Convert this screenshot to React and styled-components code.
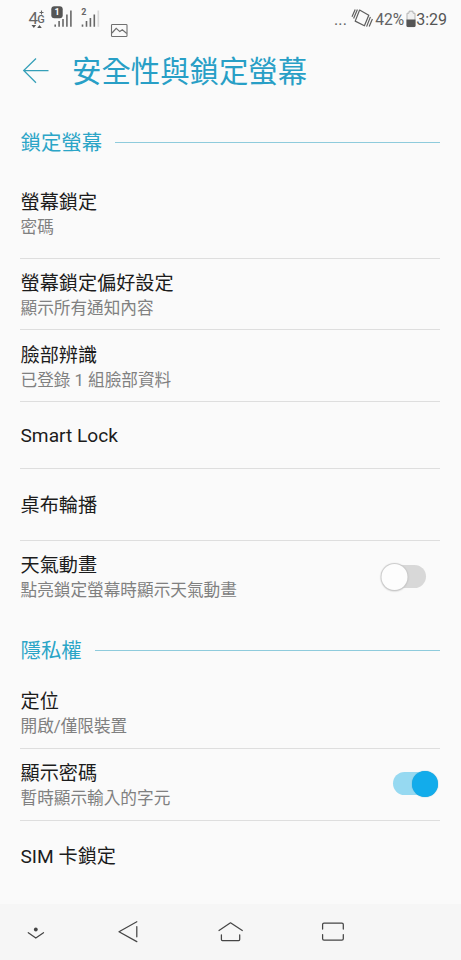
import React, { useState } from 'react';
import styled, { createGlobalStyle } from 'styled-components';

const GlobalStyle = createGlobalStyle`
  * {
    box-sizing: border-box;
  }

  body {
    margin: 0;
    background: #fafafa;
    font-family: Roboto, 'Noto Sans CJK TC', sans-serif;
  }
`;

const Screen = styled.div`
  width: 461px;
  height: 960px;
  display: flex;
  flex-direction: column;
  background: #fafafa;
  overflow: hidden;
`;

const StatusBar = styled.div`
  height: 38px;
  display: flex;
  justify-content: space-between;
  padding: 0 14px 0 28px;
  color: #626262;
`;

const StatusRight = styled.div`
  display: flex;
  align-items: center;
  height: 38px;
`;

const Dots = styled.span`
  font-size: 16px;
  letter-spacing: 0.2px;
  margin-right: 4px;
`;

const Percent = styled.span`
  font-size: 15.6px;
  padding-top: 1px;
  margin: 0 2px 0 2px;
`;

const Clock = styled.span`
  font-size: 16px;
  color: #555;
`;

const TitleBar = styled.header`
  height: 66px;
  display: flex;
  align-items: center;
  gap: 23px;
  padding-left: 22px;
`;

const Title = styled.h1`
  margin: 0;
  padding-top: 2px;
  font-size: 29.4px;
  line-height: 44px;
  font-weight: 400;
  color: #289fc6;
`;

const SectionHeader = styled.div`
  height: 76px;
  display: flex;
  align-items: center;
  gap: 13px;
  padding: 0 21px 0 20.5px;
  color: #2ba5c7;
  font-size: 20.4px;

  &::after {
    content: '';
    flex: 1;
    height: 1px;
    background: #8ecbdc;
  }
`;

const SectionName = styled.span`
  padding-top: 2px;
  line-height: 30px;
`;

const Row = styled.div`
  height: ${(props) => props.$height}px;
  display: flex;
  justify-content: space-between;
  align-items: ${(props) => (props.$single ? 'center' : 'flex-start')};
  margin: 0 21px 0 20px;
  padding-top: ${(props) => props.$top || 0}px;
  border-bottom: ${(props) => (props.$last ? 'none' : '1px solid #dedede')};
`;

const Label = styled.div`
  font-size: 19.15px;
  line-height: 25px;
  color: #1c1c1c;
  padding-left: 0.5px;
`;

const Summary = styled.div`
  font-size: 16.65px;
  line-height: 25px;
  color: #808080;
  padding-left: 0.5px;
`;

const Track = styled.button`
  width: 44px;
  height: 23px;
  display: flex;
  align-items: center;
  margin: ${(props) => (props.$on ? '11px 3px 0 0' : '12px 14px 0 0')};
  padding: 0;
  border: none;
  border-radius: 999px;
  background: ${(props) => (props.$on ? '#96d9f1' : '#d8d8d8')};
`;

const Knob = styled.span`
  width: 26px;
  height: 26px;
  flex: none;
  border-radius: 50%;
  background: ${(props) => (props.$on ? '#12aceb' : '#fdfdfd')};
  box-shadow: ${(props) =>
    props.$on ? '0 0 1px #3195bd' : '0 0 1px 1px #c9c9c9, 0 1px 2px #bbb'};
  transform: translateX(${(props) => (props.$on ? '19px' : '-0.5px')});
  transition: transform 0.2s;
`;

const NavBar = styled.nav`
  height: 56px;
  margin-top: auto;
  display: flex;
  background: #f6f6f6;
`;

const SignalIcons = () => (
  <svg width="105" height="38" viewBox="28 0 105 38" fill="none">
    <text x="28.5" y="24" fontSize="17" fill="#666">4</text>
    <text x="37.3" y="23" fontSize="11" fontWeight="500" fill="#666">G</text>
    <path d="M39.5 12.5h4M41.5 10.5v4" stroke="#666" strokeWidth="1.1" />
    <path d="M31.5 25h4.6l-2.3 3zM37.2 28h4.6l-2.3-3z" fill="#555" />
    <rect x="51.3" y="6.2" width="11.4" height="12" rx="3" fill="#555" />
    <text x="54.6" y="15.4" fontSize="9" fontWeight="700" fill="#fff">1</text>
    <path d="M55.2 24.5v2.3M59.1 21v5.8M63 19v7.8M66.9 14.5v12.3M70.9 10.5v16.3" stroke="#686868" strokeWidth="1.6" />
    <text x="81.3" y="15" fontSize="9" fontWeight="700" fill="#666">2</text>
    <path d="M82.5 24.5v2.3M86.5 21v5.8M90.4 18v8.8M94.3 14.5v12.3" stroke="#686868" strokeWidth="1.6" />
    <path d="M98.3 10.5v16.3" stroke="#d9d9d9" strokeWidth="1.7" />
    <rect x="111.5" y="24.5" width="15.5" height="12" rx="0.8" stroke="#707070" strokeWidth="1.1" />
    <path d="M112 33l4.2-4.7 3.6 3.3 2.5-1.8 4.5 3.7" stroke="#707070" strokeWidth="1.2" />
  </svg>
);

const RotateIcon = () => (
  <svg width="22" height="22" viewBox="0 0 22 22" fill="none" stroke="#5e5e5e" strokeWidth="1.2" strokeLinejoin="round">
    <path d="M8.6 2l9.2 5.2-4.4 10.6-9.2-4.7z" />
    <path d="M6.4 1.4L2.6 10.6M4.2 1.6L1 8.8M19.4 8.9l-3.8 9.7M21.4 11l-3.2 7.4" />
  </svg>
);

const BatteryIcon = () => (
  <svg width="10" height="18" viewBox="0 0 10 18">
    <path d="M3 1.2h4v2h2v12.5a1 1 0 01-1 1H2a1 1 0 01-1-1V3.2h2z" fill="#f0f0f0" stroke="#b3b3b3" />
    <path d="M.5 9.5h9v6.2a1.2 1.2 0 01-1.2 1.2H1.7A1.2 1.2 0 01.5 15.7z" fill="#555" />
  </svg>
);

const BackArrow = () => (
  <svg width="27" height="26" viewBox="0 0 27 26" fill="none" stroke="#359fb8" strokeWidth="1.25">
    <path d="M26.5 12.5H1.7M14 .5l-12.3 12L14 24.7" />
  </svg>
);

const NavIcons = () => (
  <svg width="461" height="56" viewBox="0 904 461 56" fill="none" stroke="#454545" strokeWidth="1.25" strokeLinecap="round" strokeLinejoin="round">
    <circle cx="35.8" cy="929.5" r="1.9" fill="#454545" stroke="none" />
    <path d="M28.3 932.7l7.5 5.3 7.7-5.3" />
    <path d="M136.8 921.7l-17.8 10 17.8 9.9M136.8 926.5v10.3" />
    <path d="M219 930.5l11.5-7.7 11.8 7.7M221.4 934.8v4.8q0 1 1 1h16.3q1 0 1-1v-4.8" />
    <path d="M322.6 929v-4.4q0-1.4 1.4-1.4h17.9q1.4 0 1.4 1.4v4.4M322.6 934.6v4.2q0 1.4 1.4 1.4h17.9q1.4 0 1.4-1.4v-4.2" />
  </svg>
);

const Switch = ({ initial }) => {
  const [on, setOn] = useState(initial);

  return (
    <Track $on={on} onClick={() => setOn(!on)}>
      <Knob $on={on} />
    </Track>
  );
};

const Section = ({ name }) => (
  <SectionHeader>
    <SectionName>{name}</SectionName>
  </SectionHeader>
);

const Item = ({ label, summary, height, top, last, children }) => (
  <Row $height={height} $top={top} $last={last} $single={!summary}>
    <div>
      <Label>{label}</Label>
      {summary && <Summary>{summary}</Summary>}
    </div>
    {children}
  </Row>
);

const App = () => {
  return (
    <Screen lang="zh-TW">
      <GlobalStyle />
      <StatusBar>
        <SignalIcons />
        <StatusRight>
          <Dots>...</Dots>
          <RotateIcon />
          <Percent>42%</Percent>
          <BatteryIcon />
          <Clock>3:29</Clock>
        </StatusRight>
      </StatusBar>

      <TitleBar>
        <BackArrow />
        <Title>安全性與鎖定螢幕</Title>
      </TitleBar>

      <Section name="鎖定螢幕" />
      <Item label="螢幕鎖定" summary="密碼" height={79} top={10} />
      <Item label="螢幕鎖定偏好設定" summary="顯示所有通知內容" height={71} top={12} />
      <Item label="臉部辨識" summary="已登錄 1 組臉部資料" height={72} top={13} />
      <Item label="Smart Lock" height={67} top={1} />
      <Item label="桌布輪播" height={72} top={1} />
      <Item label="天氣動畫" summary="點亮鎖定螢幕時顯示天氣動畫" height={71} top={12} last>
        <Switch initial={false} />
      </Item>

      <Section name="隱私權" />
      <Item label="定位" summary="開啟/僅限裝置" height={61} top={1} />
      <Item label="顯示密碼" summary="暫時顯示輸入的字元" height={72} top={12}>
        <Switch initial />
      </Item>
      <Item label="SIM 卡鎖定" height={71} last />

      <NavBar>
        <NavIcons />
      </NavBar>
    </Screen>
  );
};

export default App;
